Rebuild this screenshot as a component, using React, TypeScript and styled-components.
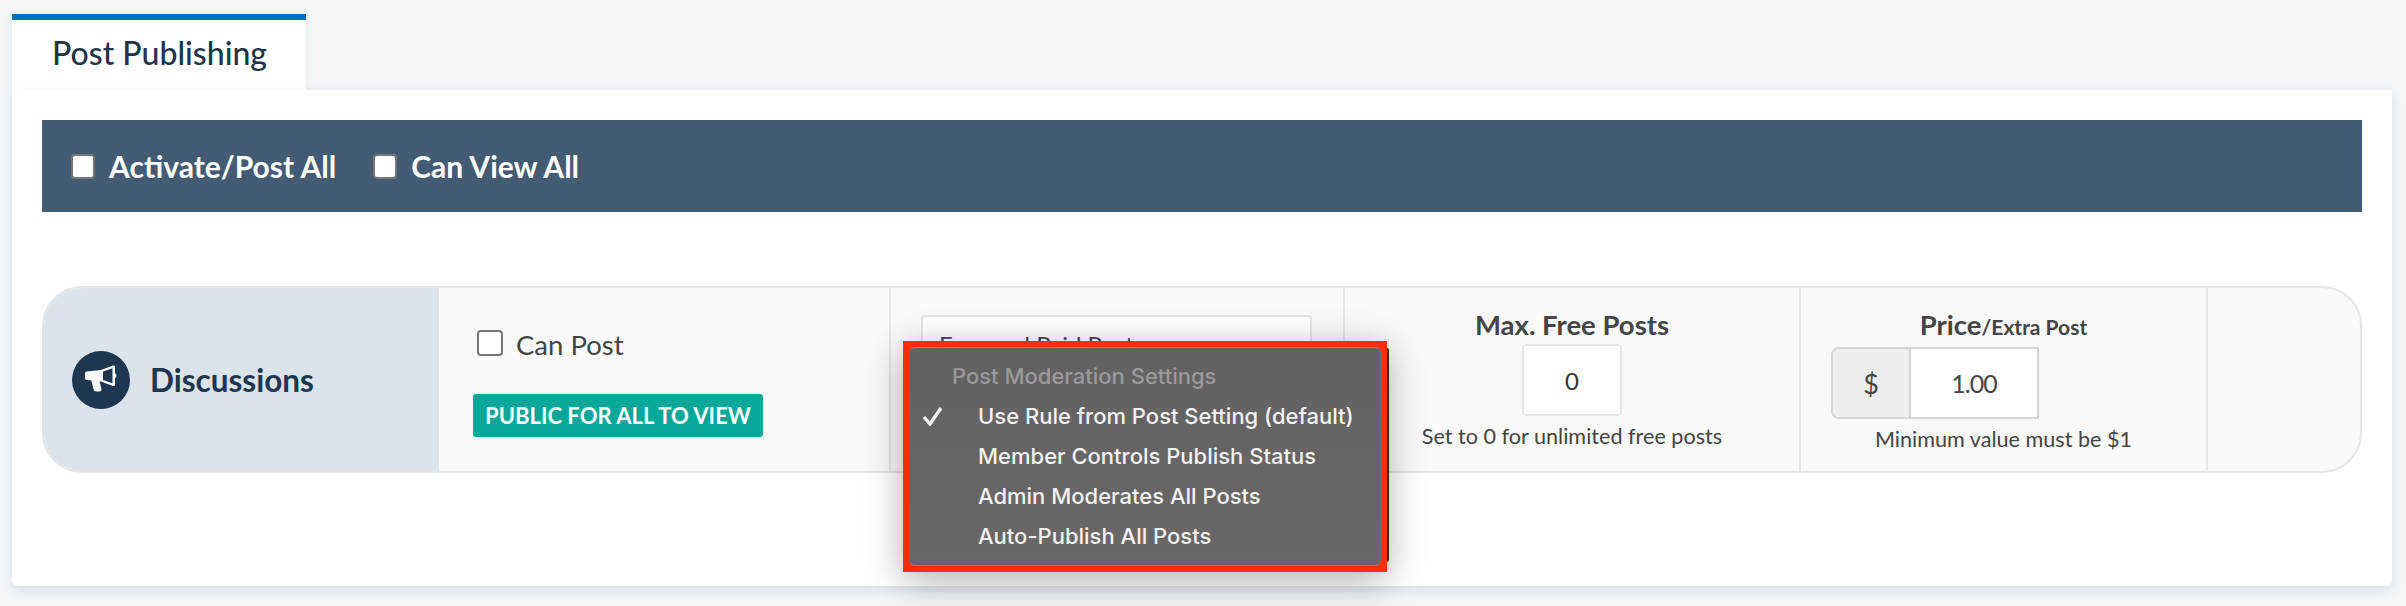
import React from 'react';
import styled, { createGlobalStyle } from 'styled-components';

const GlobalStyle = createGlobalStyle`
  html, body { margin: 0; padding: 0; background: #f2f6f9; }
  body { width: 2406px; height: 606px; overflow: hidden; font-family: "Lato", "Open Sans", sans-serif; }
`;

const Page = styled.div`
  padding: 14px 14px 20px 12px;
  height: 606px;
  box-sizing: border-box;
`;

const Tab = styled.div`
  width: 294px;
  height: 76px;
  box-sizing: border-box;
  background: #fff;
  border-top: 6px solid #0070bd;
  padding-left: 40px;
  line-height: 65px;
  font-size: 32px;
  font-weight: 500;
  color: #1f3349;
  box-shadow: 0 0 8px rgba(40, 60, 80, 0.08);
`;

const Panel = styled.div`
  position: relative;
  height: 496px;
  box-sizing: border-box;
  background: #fff;
  border-radius: 0 0 6px 6px;
  padding: 30px 30px 0 30px;
  box-shadow: 0 4px 12px rgba(40, 60, 80, 0.12);
`;

const Bar = styled.div`
  height: 92px;
  background: #435b73;
  display: flex;
  align-items: center;
  gap: 37px;
  padding-left: 29px;
`;

const BarOption = styled.label`
  display: flex;
  align-items: center;
  gap: 14px;
  font-size: 30px;
  font-weight: 700;
  color: #fff;
`;

const Box = styled.span`
  display: block;
  width: 24px;
  height: 25px;
  box-sizing: border-box;
  background: #fff;
  border: 2px solid #767676;
  border-radius: 4px;
`;

const PostBox = styled(Box)`
  width: 26px;
  height: 26px;
  margin-top: -4px;
`;

const Row = styled.div`
  margin-top: 74px;
  height: 187px;
  box-sizing: border-box;
  display: flex;
  border: 2px solid #e4e5e6;
  border-radius: 40px;
  background: #f9f9f9;
  overflow: hidden;
`;

const NameCell = styled.div`
  width: 397px;
  flex: none;
  margin: -2px 0 -2px -2px;
  background: #dce4eb;
  display: flex;
  align-items: center;
  gap: 20px;
  padding-left: 30px;
  box-sizing: border-box;
`;

const IconCircle = styled.div`
  width: 58px;
  height: 58px;
  border-radius: 50%;
  background: #1f3650;
  display: flex;
  align-items: center;
  justify-content: center;
`;

const RowName = styled.div`
  font-size: 31.5px;
  font-weight: 700;
  color: #1f3650;
`;

const Cell = styled.div<{ $w: number }>`
  width: ${p => p.$w}px;
  flex: none;
  box-sizing: border-box;
  border-right: 2px solid #e6e6e6;
`;

const PostCell = styled(Cell)`
  padding: 40px 0 0 34px;
`;

const CanPost = styled.label`
  display: flex;
  align-items: center;
  gap: 13px;
  margin-left: 4px;
  font-size: 27.5px;
  color: #444;
`;

const Badge = styled.div`
  margin-top: 33px;
  width: 290px;
  height: 43px;
  line-height: 43px;
  text-align: center;
  background: #07a899;
  border-radius: 3px;
  color: #fff;
  font-size: 22px;
  font-weight: 700;
`;

const SelectCell = styled(Cell)`
  padding: 27px 0 0 30px;
`;

const SelectBox = styled.div`
  width: 391px;
  height: 70px;
  box-sizing: border-box;
  background: #fff;
  border: 2px solid #e4e5e6;
  border-radius: 4px;
  padding: 13px 16px;
  font-size: 24px;
  color: #444;
`;

const CenterCell = styled(Cell)`
  display: flex;
  flex-direction: column;
  align-items: center;
  padding-top: 20px;
`;

const FieldTitle = styled.div`
  font-size: 27.5px;
  line-height: 34px;
  font-weight: 700;
  color: #444;
`;

const TitleNote = styled.span`
  font-size: 21px;
`;

const FreeInput = styled.div`
  margin-top: 2px;
  width: 100px;
  height: 72px;
  box-sizing: border-box;
  background: #fff;
  border: 2px solid #e4e5e6;
  border-radius: 4px;
  display: flex;
  align-items: center;
  justify-content: center;
  font-size: 24px;
  color: #333;
`;

const Help = styled.div`
  margin-top: 7px;
  font-size: 21.6px;
  color: #444;
`;

const PriceGroup = styled.div`
  margin-top: 3px;
  align-self: flex-start;
  margin-left: 30px;
  display: flex;
  width: 208px;
  height: 72px;
  box-sizing: border-box;
  border: 2px solid #d4d4d4;
  border-radius: 8px 0 0 8px;
  overflow: hidden;
  background: #fff;
  font-size: 27px;
  color: #444;
`;

const Addon = styled.div`
  width: 76px;
  background: #eeeeee;
  border-right: 2px solid #d4d4d4;
  display: flex;
  align-items: center;
  justify-content: center;
`;

const PriceValue = styled.div`
  flex: 1;
  display: flex;
  align-items: center;
  justify-content: center;
  font-size: 25px;
  letter-spacing: -1px;
`;

const Menu = styled.div`
  position: absolute;
  left: 891px;
  top: 251px;
  width: 484px;
  height: 231px;
  box-sizing: border-box;
  border: 6px solid #fb2d0c;
  background: #fb2d0c;
  box-shadow: 0 8px 36px rgba(0, 0, 0, 0.32);
  font-family: "Inter", "Noto Sans", sans-serif;
  font-size: 22px;
  font-weight: 500;
  color: #f2f2f2;
  white-space: nowrap;

  /* the real menu's dark edge pokes out past the red marker */
  &::after {
    content: '';
    position: absolute;
    top: 1px;
    bottom: 4px;
    right: -8px;
    width: 2px;
    background: #2a2a2a;
    border-radius: 0 4px 4px 0;
  }
`;

const MenuSurface = styled.div`
  height: 100%;
  box-sizing: border-box;
  padding-top: 9px;
  border: 1px solid #6f6e6e;
  border-top-color: #858484;
  border-bottom-color: #858484;
  border-radius: 6px;
  background: linear-gradient(#636263, #6a6766);
`;

const MenuHeader = styled.div`
  height: 39px;
  line-height: 39px;
  padding-left: 42px;
  color: #9b9a9b;
`;

const MenuItem = styled.div`
  position: relative;
  height: 40px;
  line-height: 40px;
  padding-left: 68px;
`;

const Check = styled.svg`
  position: absolute;
  left: 12px;
  top: 10px;
`;

const Megaphone = () => (
  <svg width="34" height="30" viewBox="0 0 34 30" fill="#fff">
    <path d="M1 8.5 C1 7 2 6.5 3 6.5 L17 5 L29 0.5 L31 1 L31 8.5 C33 9 33 12.5 31 13 L31 20.5 L29 21 L17 16.5 L15.5 16.3 L17.5 24 C17.8 26 16 26.5 15 26.5 L12 26.5 C10.5 26.5 10 25.8 9.7 24.8 L7.3 15.6 L3 15 C2 15 1 14.5 1 13 Z M19 6.5 L19 15 L28.5 18.3 L28.5 3.2 Z" fillRule="evenodd" />
  </svg>
);

export default function App() {
  return (
    <Page>
      <GlobalStyle />
      <Tab>Post Publishing</Tab>
      <Panel>
        <Bar>
          <BarOption><Box />Activate/Post All</BarOption>
          <BarOption><Box />Can View All</BarOption>
        </Bar>
        <Row>
          <NameCell>
            <IconCircle><Megaphone /></IconCircle>
            <RowName>Discussions</RowName>
          </NameCell>
          <PostCell $w={452}>
            <CanPost><PostBox />Can Post</CanPost>
            <Badge>PUBLIC FOR ALL TO VIEW</Badge>
          </PostCell>
          <SelectCell $w={454}>
            <SelectBox>Free and Paid Posts</SelectBox>
          </SelectCell>
          <CenterCell $w={456}>
            <FieldTitle>Max. Free Posts</FieldTitle>
            <FreeInput>0</FreeInput>
            <Help>Set to 0 for unlimited free posts</Help>
          </CenterCell>
          <CenterCell $w={407}>
            <FieldTitle>Price<TitleNote>/Extra Post</TitleNote></FieldTitle>
            <PriceGroup>
              <Addon>$</Addon>
              <PriceValue>1.00</PriceValue>
            </PriceGroup>
            <Help>Minimum value must be $1</Help>
          </CenterCell>
        </Row>
        <Menu>
          <MenuSurface>
            <MenuHeader>Post Moderation Settings</MenuHeader>
            <MenuItem>
              <Check width="22" height="20" viewBox="0 0 22 20" fill="none" stroke="#f2f2f2" strokeWidth="3.4">
                <path d="M2 11 L8 18 L19 2" />
              </Check>
              Use Rule from Post Setting (default)
            </MenuItem>
            <MenuItem>Member Controls Publish Status</MenuItem>
            <MenuItem>Admin Moderates All Posts</MenuItem>
            <MenuItem>Auto-Publish All Posts</MenuItem>
          </MenuSurface>
        </Menu>
      </Panel>
    </Page>
  );
}
